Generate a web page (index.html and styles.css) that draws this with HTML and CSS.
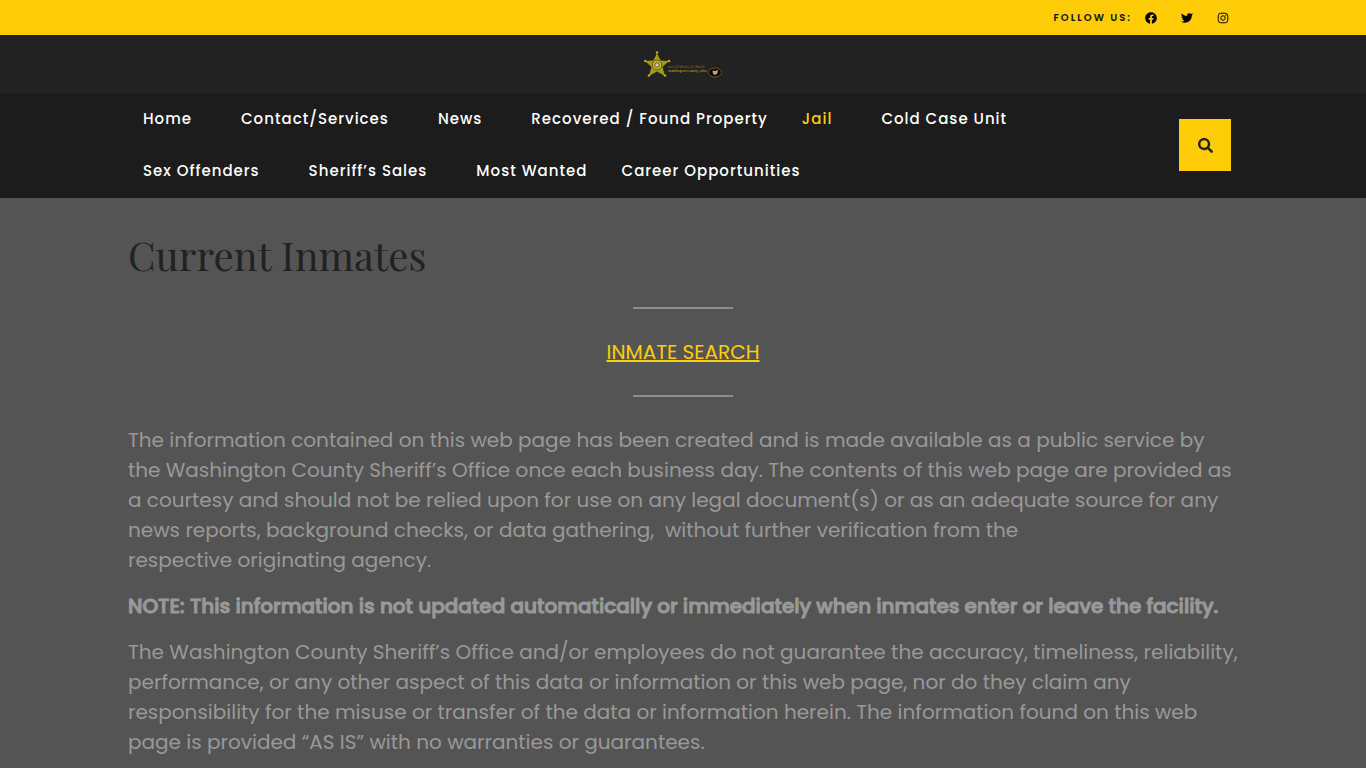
FILE: index.html
```html
<!DOCTYPE html>
<html lang="en">
<head>
    <meta charset="UTF-8">
    <meta name="viewport" content="width=device-width, initial-scale=1.0">
    <title>Current Inmates - Washington County Sheriff</title>
    <link rel="stylesheet" href="styles.css">
</head>
<body>
    <header>
        <div class="top-bar">
            <div class="container top-inner">
                <span class="follow">FOLLOW US:</span>
                <a href="#" class="social" aria-label="Facebook">
                    <svg viewBox="0 0 512 512"><path d="M504 256C504 119 393 8 256 8S8 119 8 256c0 123.800 90.700 226.400 209.300 245V327.700h-63V256h63v-54.600c0-62.200 37-96.500 93.700-96.500 27.100 0 55.500 4.800 55.500 4.800v61h-31.300c-30.800 0-40.400 19.100-40.400 38.700V256h68.800l-11 71.700h-57.800V501C413.300 482.400 504 379.800 504 256z"/></svg>
                </a>
                <a href="#" class="social" aria-label="Twitter">
                    <svg viewBox="0 0 512 512"><path d="M459.400 151.700c.3 4.500.3 9.100.3 13.600 0 138.700-105.600 298.600-298.600 298.600-59.500 0-114.700-17.200-161.100-47.100 8.400 1 16.600 1.300 25.300 1.300 49.100 0 94.200-16.600 130.300-44.800-46.100-1-84.800-31.200-98.100-72.800 6.500 1 13 1.600 19.800 1.600 9.400 0 18.800-1.300 27.600-3.600-48.100-9.700-84.100-52-84.100-103v-1.300c14 7.800 30.200 12.700 47.400 13.300-28.300-18.800-46.800-51-46.800-87.400 0-19.500 5.200-37.400 14.300-53 51.700 63.700 129.300 105.300 216.400 109.800-1.600-7.800-2.600-15.900-2.600-24 0-57.800 46.800-104.900 104.900-104.900 30.200 0 57.500 12.700 76.700 33.100 23.700-4.500 46.500-13.300 66.600-25.300-7.800 24.400-24.400 44.800-46.100 57.800 21.100-2.300 41.600-8.100 60.400-16.200-14.300 20.800-32.200 39.300-52.600 54.300z"/></svg>
                </a>
                <a href="#" class="social" aria-label="Instagram">
                    <svg viewBox="0 0 512 512"><g fill="none" stroke="#000" stroke-width="40"><rect x="52" y="52" width="408" height="408" rx="112"/><circle cx="256" cy="256" r="96"/></g><circle cx="376" cy="136" r="27"/></svg>
                </a>
            </div>
        </div>

        <div class="logo-bar">
            <a href="#" aria-label="Washington County Sheriff">
                <svg class="logo" viewBox="0 0 80 28">
                    <path d="M14 3 L17.500 10.500 L26 11 L19.500 17 L22 26 L14 21.500 L6 26 L8.500 17 L2 11 L10.500 10.500Z" fill="#a39a16"/>
                    <g fill="#b9ae20">
                        <circle cx="14" cy="2.500" r="1.300"/>
                        <circle cx="26" cy="11" r="1.300"/>
                        <circle cx="22" cy="25.500" r="1.300"/>
                        <circle cx="6" cy="25.500" r="1.300"/>
                        <circle cx="2.300" cy="11" r="1.300"/>
                    </g>
                    <circle cx="14" cy="15" r="4.800" fill="#c7bb2b" stroke="#625b0d"/>
                    <circle cx="14" cy="15" r="2.300" fill="#d6c8a0" stroke="#6b4b28"/>
                    <text x="25" y="18" font-size="3" fill="#8c6c20">Larry R. Mincks, Sr. Sheriff</text>
                    <text x="25" y="22" font-size="3" font-weight="500" fill="#c0961a">Washington County, Ohio</text>
                    <ellipse cx="72" cy="22.500" rx="6.500" ry="4.500" fill="#090606" stroke="#7d5419"/>
                    <path d="M69.500 20.500 L72 21 L75 20 L74.500 23 L72.500 25 L70 24Z" fill="#d19a7c"/>
                </svg>
            </a>
        </div>

        <div class="nav-bar">
            <div class="container nav-inner">
                <nav>
                    <ul class="menu">
                        <li class="has-sub"><a href="#">Home</a></li>
                        <li class="has-sub"><a href="#">Contact/Services</a></li>
                        <li class="has-sub"><a href="#">News</a></li>
                        <li><a href="#">Recovered / Found Property</a></li>
                        <li class="has-sub active"><a href="#">Jail</a></li>
                        <li><a href="#">Cold Case Unit</a></li>
                        <li class="has-sub"><a href="#">Sex Offenders</a></li>
                        <li class="has-sub"><a href="#">Sheriff’s Sales</a></li>
                        <li><a href="#">Most Wanted</a></li>
                        <li><a href="#">Career Opportunities</a></li>
                    </ul>
                </nav>
                <button class="search-button" type="button" aria-label="Search">
                    <svg viewBox="0 0 512 512"><path fill="#222" d="M505 442.700L405.300 343c-4.500-4.500-10.600-7-17-7H372c27.600-35.300 44-79.700 44-128C416 93.100 322.900 0 208 0S0 93.100 0 208s93.100 208 208 208c48.300 0 92.700-16.400 128-44v16.300c0 6.400 2.500 12.500 7 17l99.700 99.700c9.400 9.400 24.600 9.400 33.900 0l28.300-28.300c9.400-9.400 9.400-24.600.1-34zM208 336c-70.700 0-128-57.200-128-128 0-70.700 57.200-128 128-128 70.700 0 128 57.200 128 128 0 70.700-57.200 128-128 128z"/></svg>
                </button>
            </div>
        </div>
    </header>

    <main class="container">
        <h1>Current Inmates</h1>
        <hr>
        <p class="inmate-search"><a href="#">INMATE SEARCH</a></p>
        <hr>
        <p>
            The information contained on this web page has been created and is made available as a public service by
            the Washington County Sheriff’s Office once each business day. The contents of this web page are provided as
            a courtesy and should not be relied upon for use on any legal document(s) or as an adequate source for any
            news reports, background checks, or data gathering,&nbsp; without further verification from the
            respective&nbsp;originating&nbsp;agency.
        </p>
        <p><strong>NOTE: This information is not updated automatically or immediately when inmates enter or leave the facility.</strong></p>
        <p>
            The Washington County Sheriff’s Office and/or employees do not guarantee the accuracy, timeliness, reliability,
            performance, or any other aspect of this data or information or this web page, nor do they claim any
            responsibility for the misuse or transfer of the data or information herein. The information found on this web
            page is provided “AS IS” with no warranties or guarantees.
        </p>
    </main>
</body>
</html>
```
FILE: styles.css
```css
* {
    margin: 0;
    padding: 0;
    box-sizing: border-box;
}

body {
    font-family: 'Poppins', sans-serif;
    background: #545454;
    color: #999;
    font-size: 20px;
    line-height: 30px;
}

.container {
    max-width: 1140px;
    margin: 0 auto;
    padding: 0 15px;
}

.top-bar {
    background: #ffcc08;
}

.top-inner {
    display: flex;
    align-items: center;
    justify-content: flex-end;
    height: 35px;
    padding-right: 24px;
}

.follow {
    color: #111;
    font-size: 10px;
    font-weight: 600;
    letter-spacing: 2px;
    margin-right: 13px;
}

.social {
    display: flex;
    margin-right: 24px;
}

.social:last-child {
    margin-right: 0;
}

.social svg {
    width: 12px;
    height: 12px;
}

.logo-bar {
    display: flex;
    justify-content: center;
    background: #222;
    padding: 15px;
}

.logo-bar a {
    display: block;
}

.logo {
    display: block;
    width: 80px;
    height: 28px;
}

.nav-bar {
    background: #1c1c1c;
    border-bottom: 1px solid #1c1c1c;
}

.nav-inner {
    display: flex;
    align-items: center;
    justify-content: space-between;
    padding-right: 22px;
}

nav {
    max-width: 940px;
}

.menu {
    display: flex;
    flex-wrap: wrap;
    list-style: none;
}

.menu li {
    padding: 0 19px 0 15px;
}

.menu .has-sub {
    padding-right: 34px;
}

.menu a {
    display: block;
    color: #fff;
    font-size: 15px;
    font-weight: 500;
    letter-spacing: 1px;
    line-height: 52px;
    text-decoration: none;
}

.menu .active a {
    color: #ffcc08;
}

.search-button {
    display: flex;
    align-items: center;
    justify-content: center;
    width: 52px;
    height: 52px;
    background: #ffcc08;
    border: none;
    cursor: pointer;
}

.search-button svg {
    width: 15px;
    height: 15px;
}

h1 {
    color: #222;
    font-family: 'Playfair Display', serif;
    font-size: 40px;
    font-weight: 400;
    line-height: 50px;
    padding-top: 32px;
    margin-bottom: 27px;
}

hr {
    width: 100px;
    margin: 0 auto 28px;
    border: none;
    border-top: 2px solid #8f8f8f;
}

p {
    margin-bottom: 16px;
}

/* medium weight thickened, the real bold face runs too wide */
strong {
    font-weight: 500;
    -webkit-text-stroke: 1px #999;
}

.inmate-search {
    text-align: center;
    margin-bottom: 28px;
}

.inmate-search a {
    color: #ffcc08;
}
```
